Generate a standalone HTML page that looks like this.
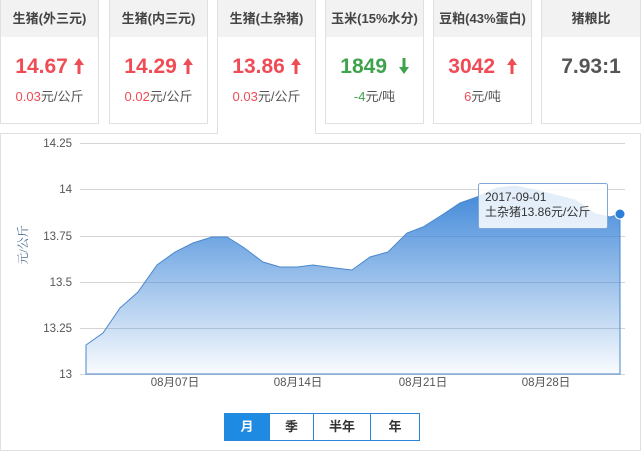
<!DOCTYPE html>
<html><head><meta charset="utf-8"><style>
*{margin:0;padding:0;box-sizing:border-box}
body{width:641px;height:453px;background:#fff;font-family:"Liberation Sans","Noto Sans CJK SC",sans-serif;position:relative;overflow:hidden}
.card{position:absolute;top:0;width:99px;height:124px;border:1px solid #e0e0e0;border-top:none;background:#fff}
.card .h{height:37px;background:#f2f2f2;text-align:center;line-height:37px;font-size:13px;color:#444;font-weight:bold}
.card .v{text-align:center;font-size:21px;font-weight:bold;margin-top:17px;height:26px;line-height:26px}
.card .v svg{vertical-align:-1px}
.card .s{text-align:center;font-size:13px;color:#555;margin-top:6px}
.r{color:#ef4c56}.g{color:#3fa34d}
.sel{height:134px;border-bottom:none;z-index:2}
.panel{position:absolute;left:0;top:133px;width:641px;height:318px;border:1px solid #e0e0e0}
.btns{position:absolute;top:413px;left:224px;height:28px;display:flex;border:1px solid #2b88d8;font-size:13px;font-weight:bold;color:#333}
.btns div{text-align:center;line-height:26px;border-left:1px solid #2b88d8}
.btns div:first-child{border-left:none;background:#1f8ae2;color:#fff}
</style></head><body>
<div class="card" style="left:0"><div class="h">生猪(外三元)</div><div class="v r">14.67 <svg width="10" height="16" viewBox="0 0 10 16"><path d="M5 0 L10 7 L6.5 7 L6.5 16 L3.5 16 L3.5 7 L0 7Z" fill="#ef4c56"/></svg></div><div class="s"><span class="r">0.03</span>元/公斤</div></div>
<div class="card" style="left:109px"><div class="h">生猪(内三元)</div><div class="v r">14.29 <svg width="10" height="16" viewBox="0 0 10 16"><path d="M5 0 L10 7 L6.5 7 L6.5 16 L3.5 16 L3.5 7 L0 7Z" fill="#ef4c56"/></svg></div><div class="s"><span class="r">0.02</span>元/公斤</div></div>
<div class="card sel" style="left:217px"><div class="h">生猪(土杂猪)</div><div class="v r">13.86 <svg width="10" height="16" viewBox="0 0 10 16"><path d="M5 0 L10 7 L6.5 7 L6.5 16 L3.5 16 L3.5 7 L0 7Z" fill="#ef4c56"/></svg></div><div class="s"><span class="r">0.03</span>元/公斤</div></div>
<div class="card" style="left:325px"><div class="h">玉米(15%水分)</div><div class="v g">1849 &nbsp;<svg width="10" height="16" viewBox="0 0 10 16"><path d="M5 16 L10 9 L6.5 9 L6.5 0 L3.5 0 L3.5 9 L0 9Z" fill="#3fa34d"/></svg></div><div class="s"><span class="g">-4</span>元/吨</div></div>
<div class="card" style="left:433px"><div class="h">豆粕(43%蛋白)</div><div class="v r">3042 &nbsp;<svg width="10" height="16" viewBox="0 0 10 16"><path d="M5 0 L10 7 L6.5 7 L6.5 16 L3.5 16 L3.5 7 L0 7Z" fill="#ef4c56"/></svg></div><div class="s"><span class="r">6</span>元/吨</div></div>
<div class="card" style="left:541px;width:100px"><div class="h">猪粮比</div><div class="v" style="color:#555">7.93:1</div></div>
<div class="panel"></div>
<svg style="position:absolute;left:0;top:0" width="641" height="453">
<defs><linearGradient id="gr" x1="0" y1="0" x2="0" y2="1"><stop offset="0" stop-color="#3d86d8"/><stop offset="1" stop-color="#3d86d8" stop-opacity="0.03"/></linearGradient></defs>
<g stroke="#d4d4d4" stroke-width="1">
<line x1="80" y1="143.5" x2="625" y2="143.5"/><line x1="80" y1="189.5" x2="625" y2="189.5"/><line x1="80" y1="236.5" x2="625" y2="236.5"/><line x1="80" y1="282.5" x2="625" y2="282.5"/><line x1="80" y1="328.5" x2="625" y2="328.5"/><line x1="80" y1="374.5" x2="625" y2="374.5"/>
</g>
<path d="M86,345 L103,333 L120,308 L138,292 L157,265 L175,252 L193,243 L212,237 L227,237 L243,247 L263,262 L280,267 L297,267 L313,265 L335,268 L352,270 L370,257 L388,252 L407,233 L423,227 L442,215 L460,203 L477,197 L497,188 L515,186 L535,190 L555,195 L575,200 L595,214 L610,217 L620,214 L620,374 L86,374Z" fill="url(#gr)" stroke="#4a88cc" stroke-width="1"/>
<circle cx="620" cy="214" r="5" fill="#2b7fd8" stroke="#fff" stroke-width="1"/>
<g font-size="11.5" fill="#555" text-anchor="end">
<text x="72" y="147">14.25</text><text x="72" y="193">14</text><text x="72" y="240">13.75</text><text x="72" y="286">13.5</text><text x="72" y="332">13.25</text><text x="72" y="378">13</text></g>
<g font-size="11.5" fill="#555" text-anchor="middle">
<text x="175" y="386">08月07日</text><text x="298" y="386">08月14日</text><text x="423" y="386">08月21日</text><text x="546" y="386">08月28日</text></g>
<text transform="translate(27,245) rotate(-90)" font-size="12" fill="#4a6a8f" text-anchor="middle" font-family="Liberation Serif,Noto Serif CJK SC,serif">元/公斤</text>
<rect x="478.5" y="183.5" width="129" height="45" rx="2" fill="#fff" fill-opacity="0.85" stroke="#7fa8d8"/>
<text x="485" y="201" font-size="12" fill="#333">2017-09-01</text>
<text x="485" y="216" font-size="12" fill="#333">土杂猪13.86元/公斤</text>
</svg>
<div class="btns"><div style="width:44px">月</div><div style="width:44px">季</div><div style="width:57px">半年</div><div style="width:49px">年</div></div>
</body></html>
